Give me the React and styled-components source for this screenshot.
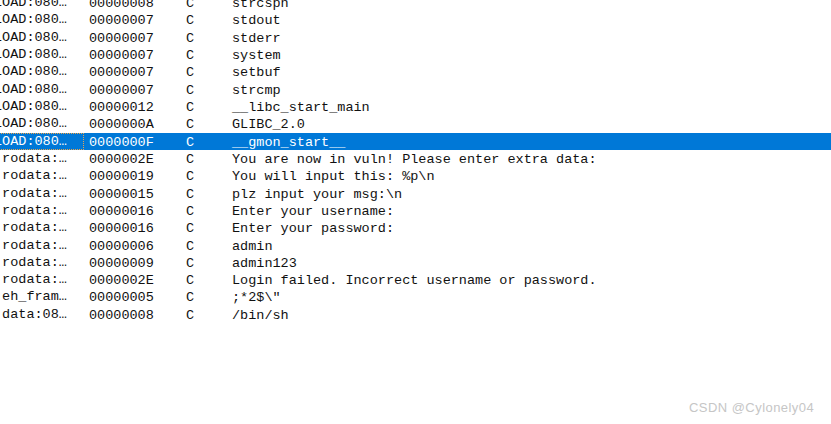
import React from 'react';
import styled, { createGlobalStyle } from 'styled-components';

const GlobalStyle = createGlobalStyle`
  html, body {
    margin: 0;
    padding: 0;
    background: #fff;
  }
`;

const Page = styled.div`
  position: relative;
  width: 831px;
  height: 424px;
  overflow: hidden;
  background: #fff;
`;

const List = styled.div`
  margin: -6.1px 0 0 -6px;
  display: flex;
  flex-direction: column;
`;

const Row = styled.div`
  display: grid;
  grid-template-columns: 90px 97px 46px 1fr;
  height: 17.33px;
  font-family: "Liberation Mono", "DejaVu Sans Mono", monospace;
  font-size: 13.5px;
  color: ${({ selected }) => (selected ? '#fff' : '#111')};
  background: ${({ selected }) => (selected ? '#0078d7' : 'transparent')};
  white-space: pre;
`;

const AddrCell = styled.div`
  box-sizing: border-box;
  height: 17.33px;
  padding-top: 1px;
  border: 1px dotted ${({ focused }) => (focused ? '#e9a34a' : 'transparent')};
  border-left: none;
  line-height: 14.33px;
`;

const AddrText = styled.span`
  display: block;
  width: 76px;
  overflow: hidden;
  text-overflow: ellipsis;
`;

const Cell = styled.div`
  box-sizing: border-box;
  height: 17.33px;
  padding: 2px 0 0 ${({ pad }) => pad}px;
  line-height: 15.33px;
`;

const Watermark = styled.div`
  position: absolute;
  left: 689px;
  top: 400px;
  font-family: "Liberation Sans", Arial, sans-serif;
  font-size: 13px;
  color: #c6c6c6;
  letter-spacing: 0.45px;
`;

const rows = [
  ['LOAD:080482A5', '00000008', 'strcspn'],
  ['LOAD:080482AD', '00000007', 'stdout'],
  ['LOAD:080482B4', '00000007', 'stderr'],
  ['LOAD:080482BB', '00000007', 'system'],
  ['LOAD:080482C2', '00000007', 'setbuf'],
  ['LOAD:080482C9', '00000007', 'strcmp'],
  ['LOAD:080482D0', '00000012', '__libc_start_main'],
  ['LOAD:080482E2', '0000000A', 'GLIBC_2.0'],
  ['LOAD:080482EC', '0000000F', '__gmon_start__'],
  ['.rodata:08048A08', '0000002E', 'You are now in vuln! Please enter extra data:'],
  ['.rodata:08048A36', '00000019', 'You will input this: %p\\n'],
  ['.rodata:08048A4F', '00000015', 'plz input your msg:\\n'],
  ['.rodata:08048A64', '00000016', 'Enter your username: '],
  ['.rodata:08048A7A', '00000016', 'Enter your password: '],
  ['.rodata:08048A90', '00000006', 'admin'],
  ['.rodata:08048A96', '00000009', 'admin123'],
  ['.rodata:08048AA0', '0000002E', 'Login failed. Incorrect username or password.'],
  ['.eh_frame:08048B2F', '00000005', ';*2$\\"'],
  ['.data:0804A040', '00000008', '/bin/sh'],
];

const SELECTED = 8;

export default function App() {
  return (
    <Page>
      <GlobalStyle />
      <List>
        {rows.map(([addr, len, str], i) => (
          <Row key={i} selected={i === SELECTED}>
            <AddrCell focused={i === SELECTED}>
              <AddrText>{addr}</AddrText>
            </AddrCell>
            <Cell pad={5}>{len}</Cell>
            <Cell pad={5}>C</Cell>
            <Cell pad={5}>{str}</Cell>
          </Row>
        ))}
      </List>
      <Watermark>CSDN @Cylonely04</Watermark>
    </Page>
  );
}
